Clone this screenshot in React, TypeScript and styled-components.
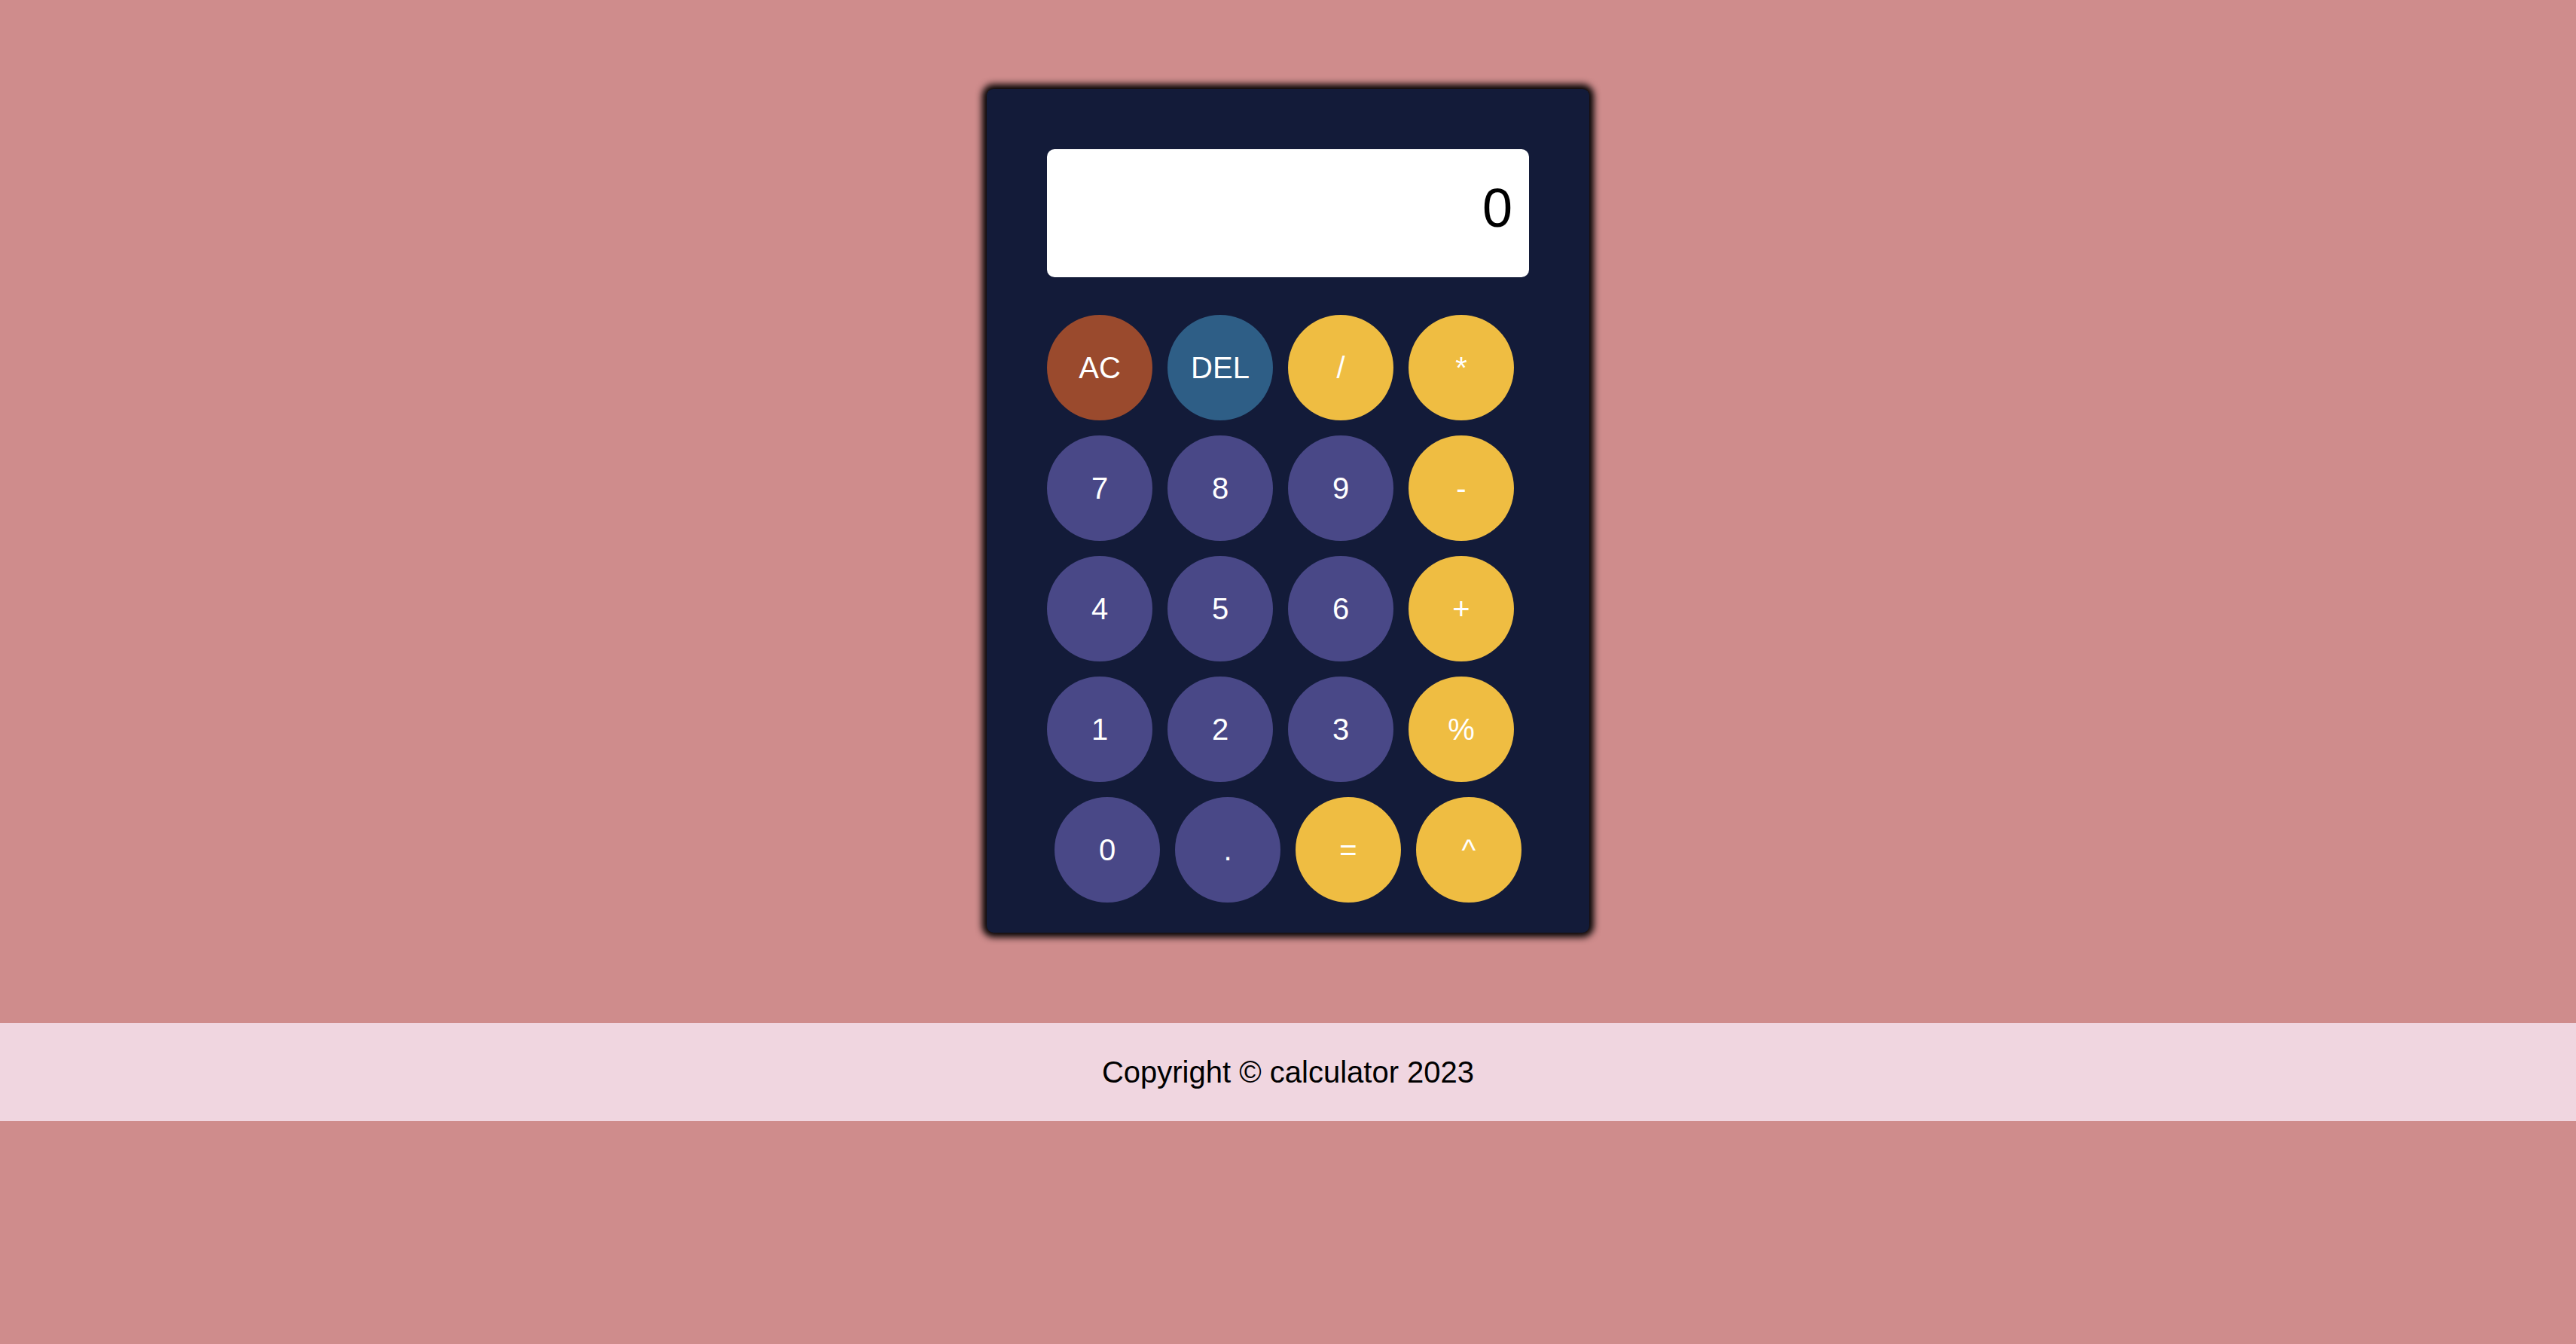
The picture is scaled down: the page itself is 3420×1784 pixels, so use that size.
import React from "react";
import styled, { createGlobalStyle } from "styled-components";

const GlobalStyle = createGlobalStyle`
  html, body {
    margin: 0;
    padding: 0;
    background: #cf8c8c;
    font-family: "Liberation Sans", Arial, sans-serif;
  }
`;

const Page = styled.div`
  min-height: 1784px;
  display: flex;
  flex-direction: column;
  align-items: stretch;
  padding-top: 118px;
  box-sizing: border-box;
`;

const Calculator = styled.div`
  align-self: center;
  width: 800px;
  height: 1120px;
  box-sizing: border-box;
  padding: 80px 80px 40px;
  background: #131b39;
  border-radius: 9px;
  box-shadow: 0 0 10px 6px #000;
  display: flex;
  flex-direction: column;
`;

const Display = styled.div`
  width: 640px;
  height: 170px;
  box-sizing: border-box;
  padding: 37px 22px 0;
  background: #ffffff;
  border-radius: 10px;
  text-align: right;
  font-size: 72px;
  line-height: normal;
  color: #000;
`;

const Keypad = styled.div`
  margin-top: 50px;
  display: flex;
  flex-direction: column;
  gap: 20px;
`;

const Row = styled.div<{ $shift?: number }>`
  display: flex;
  gap: 20px;
  padding-left: ${(p) => p.$shift ?? 0}px;
`;

type Kind = "clear" | "del" | "op" | "num";

const colors: Record<Kind, string> = {
  clear: "#9a4a2d",
  del: "#2e5e86",
  op: "#efbd42",
  num: "#494887",
};

const Key = styled.button<{ $kind: Kind }>`
  width: 140px;
  height: 140px;
  border-radius: 50%;
  border: none;
  padding: 0;
  background: ${(p) => colors[p.$kind]};
  color: #ffffff;
  font-family: "Liberation Sans", Arial, sans-serif;
  font-size: 40px;
  display: flex;
  align-items: center;
  justify-content: center;
  cursor: pointer;
`;

const Footer = styled.footer`
  margin-top: 120px;
  height: 130px;
  background: #f0d6e0;
  display: flex;
  align-items: center;
  justify-content: center;
  font-size: 40px;
  color: #000;
`;

const rows: { label: string; kind: Kind }[][] = [
  [
    { label: "AC", kind: "clear" },
    { label: "DEL", kind: "del" },
    { label: "/", kind: "op" },
    { label: "*", kind: "op" },
  ],
  [
    { label: "7", kind: "num" },
    { label: "8", kind: "num" },
    { label: "9", kind: "num" },
    { label: "-", kind: "op" },
  ],
  [
    { label: "4", kind: "num" },
    { label: "5", kind: "num" },
    { label: "6", kind: "num" },
    { label: "+", kind: "op" },
  ],
  [
    { label: "1", kind: "num" },
    { label: "2", kind: "num" },
    { label: "3", kind: "num" },
    { label: "%", kind: "op" },
  ],
  [
    { label: "0", kind: "num" },
    { label: ".", kind: "num" },
    { label: "=", kind: "op" },
    { label: "^", kind: "op" },
  ],
];

export default function App() {
  return (
    <>
      <GlobalStyle />
      <Page>
        <Calculator>
          <Display>0</Display>
          <Keypad>
            {rows.map((row, i) => (
              <Row key={i} $shift={i === rows.length - 1 ? 10 : 0}>
                {row.map((k) => (
                  <Key key={k.label} $kind={k.kind}>
                    {k.label}
                  </Key>
                ))}
              </Row>
            ))}
          </Keypad>
        </Calculator>
        <Footer>Copyright © calculator 2023</Footer>
      </Page>
    </>
  );
}
